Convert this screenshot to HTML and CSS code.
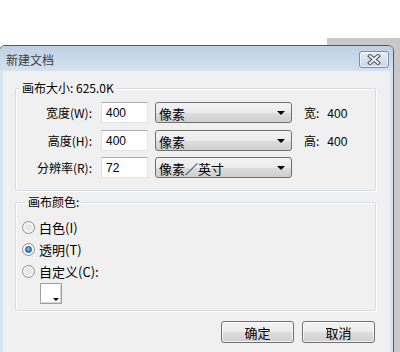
FILE: index.html
```html
<!DOCTYPE HTML>
<html>
	<head>
		<title>新建文档</title>
		<link rel="stylesheet" href="styles.css">
	</head>
	<body>
		<div class="desk">
			<div class="backWindow"></div>
			<div class="dialog">
				<div class="titleBar">
					<span class="titleText">新建文档</span>
					<span class="closeButton">
						<svg width="16" height="11" viewBox="0 0 16 11">
							<path d="M4 2 L12 9 M12 2 L4 9" stroke="#4a4f57" stroke-width="4" stroke-linecap="square"/>
							<path d="M4 2 L12 9 M12 2 L4 9" stroke="#f2f4f7" stroke-width="2" stroke-linecap="square"/>
						</svg>
					</span>
				</div>
				<div class="content">
					<fieldset class="group sizeGroup">
						<legend>画布大小: 625.0K</legend>
						<div class="row">
							<span class="label">宽度(W):</span>
							<span class="numBox">400</span>
							<span class="select">像素<span class="arrow"></span></span>
							<span class="dim">宽:<span class="dimValue">400</span></span>
						</div>
						<div class="row">
							<span class="label">高度(H):</span>
							<span class="numBox">400</span>
							<span class="select">像素<span class="arrow"></span></span>
							<span class="dim">高:<span class="dimValue">400</span></span>
						</div>
						<div class="row">
							<span class="label">分辨率(R):</span>
							<span class="numBox">72</span>
							<span class="select">像素／英寸<span class="arrow"></span></span>
						</div>
					</fieldset>
					<fieldset class="group colorGroup">
						<legend>画布颜色:</legend>
						<div class="radioRow"><span class="radio"></span>白色(I)</div>
						<div class="radioRow"><span class="radio checked"></span>透明(T)</div>
						<div class="radioRow"><span class="radio"></span>自定义(C):</div>
						<div class="swatch"><span class="swatchArrow"></span></div>
					</fieldset>
					<div class="actions">
						<span class="dialogButton">确定</span>
						<span class="dialogButton">取消</span>
					</div>
				</div>
			</div>
		</div>
	</body>
</html>
```

FILE: styles.css
```css
body
{
	margin: 0;
	background-color: #ffffff;
	font-family: "Liberation Sans", "Noto Sans CJK SC", sans-serif;
	font-size: 12px;
	color: #000000;
}
.desk
{
	position: relative;
	width: 400px;
	height: 352px;
	overflow: hidden;
}
.backWindow
{
	position: absolute;
	left: 327px;
	top: 38px;
	right: 0;
	bottom: 0;
	background-color: #c8c8c8;
}
.dialog
{
	position: absolute;
	left: -1px;
	top: 45px;
	width: 393px;
	height: 320px;
	border: 1px solid #55585c;
	border-radius: 6px 6px 0 0;
	background-color: #d6e3f0;
	display: flex;
	flex-direction: column;
}
.titleBar
{
	height: 24px;
	display: flex;
	align-items: center;
	justify-content: space-between;
	padding: 0 4px 0 6px;
	background: linear-gradient(#bdd0e2, #d3e1ee);
	border-radius: 5px 5px 0 0;
}
.titleText
{
	font-family: "Noto Sans CJK SC", sans-serif;
	font-size: 12px;
	color: #3c3f44;
	margin-top: 2px;
}
.closeButton
{
	width: 28px;
	height: 15px;
	border: 1px solid #7d8ea8;
	border-radius: 3px;
	background: linear-gradient(#e4ecf5, #c9d7e6);
	box-shadow: inset 0 0 0 1px rgba(255, 255, 255, 0.6);
	display: flex;
	align-items: center;
	justify-content: center;
	margin-top: 3px;
}
.content
{
	flex: 1;
	margin: 1px 3px 0 3px;
	background-color: #f0f0f0;
	display: flex;
	flex-direction: column;
	padding: 10px 0 0 12px;
}
.group
{
	box-sizing: border-box;
	margin: 0;
	width: 361px;
	padding: 0;
	border: 1px solid #d3dde6;
	border-radius: 2px;
	box-shadow: inset 1px 1px #ffffff, 1px 1px #ffffff;
}
.group legend
{
	padding: 0 2px;
	margin-left: 4px;
	line-height: 14px;
	font-family: "Noto Sans CJK SC", sans-serif;
}
.sizeGroup
{
	display: flex;
	flex-direction: column;
	gap: 6.5px;
	padding: 7px 0 12px 0;
}
.row
{
	display: flex;
	align-items: center;
	height: 21px;
}
.label
{
	width: 76px;
	text-align: right;
	font-family: "Noto Sans CJK SC", sans-serif;
}
.numBox
{
	box-sizing: border-box;
	width: 47px;
	height: 21px;
	margin-left: 9px;
	padding: 3px 0 0 4px;
	background-color: #ffffff;
	border: 1px solid #e2e3ea;
	border-top-color: #abadb3;
	border-left-color: #dbdfe6;
}
.select
{
	box-sizing: border-box;
	position: relative;
	width: 137px;
	height: 21px;
	margin-left: 7px;
	padding: 1px 0 0 3px;
	border: 1px solid #707070;
	border-radius: 3px;
	background: linear-gradient(#f3f3f3 0%, #ebebeb 50%, #dddddd 51%, #cfcfcf 100%);
	font-family: "Noto Sans CJK SC", sans-serif;
	font-size: 13px;
}
.arrow
{
	position: absolute;
	right: 6px;
	top: 8px;
	border-left: 4px solid transparent;
	border-right: 4px solid transparent;
	border-top: 4px solid #000000;
}
.dim
{
	margin-left: 12px;
	font-family: "Noto Sans CJK SC", sans-serif;
}
.dimValue
{
	margin-left: 8px;
	font-family: "Liberation Sans", sans-serif;
}
.colorGroup
{
	margin-top: 4px;
	padding: 8px 0 6px 6px;
	display: flex;
	flex-direction: column;
	gap: 2px;
}
.radioRow
{
	display: flex;
	align-items: center;
	height: 20px;
	font-family: "Noto Sans CJK SC", sans-serif;
	font-size: 13px;
}
.radio
{
	box-sizing: border-box;
	width: 13px;
	height: 13px;
	margin-right: 4px;
	border: 1px solid #8f8f8f;
	border-radius: 50%;
	background: radial-gradient(circle, #e6e6e6 30%, #f8f8f8 70%);
	display: flex;
	align-items: center;
	justify-content: center;
}
.radio.checked::after
{
	content: "";
	width: 5px;
	height: 5px;
	border-radius: 50%;
	background: radial-gradient(circle at 40% 35%, #7cc2f5, #1760b0);
	border: 1px solid #1b4f8f;
}
.swatch
{
	position: relative;
	box-sizing: border-box;
	width: 22px;
	height: 21px;
	margin-left: 18px;
	background-color: #ffffff;
	border: 1px solid #a0a0a0;
	box-shadow: inset 1px 1px #ffffff, inset -1px -1px #d0d0d0;
}
.swatchArrow
{
	position: absolute;
	right: 2px;
	bottom: 2px;
	border-left: 3px solid transparent;
	border-right: 3px solid transparent;
	border-top: 3px solid #000000;
}
.actions
{
	display: flex;
	justify-content: flex-end;
	gap: 8px;
	margin-top: 10px;
	margin-right: 15px;
}
.dialogButton
{
	box-sizing: border-box;
	width: 73px;
	height: 22px;
	border: 1px solid #707070;
	border-radius: 3px;
	background: linear-gradient(#f2f2f2 0%, #ebebeb 50%, #dddddd 51%, #cfcfcf 100%);
	box-shadow: inset 0 0 0 1px rgba(255, 255, 255, 0.7);
	display: flex;
	align-items: center;
	justify-content: center;
	font-family: "Noto Sans CJK SC", sans-serif;
	font-size: 13px;
}
```
